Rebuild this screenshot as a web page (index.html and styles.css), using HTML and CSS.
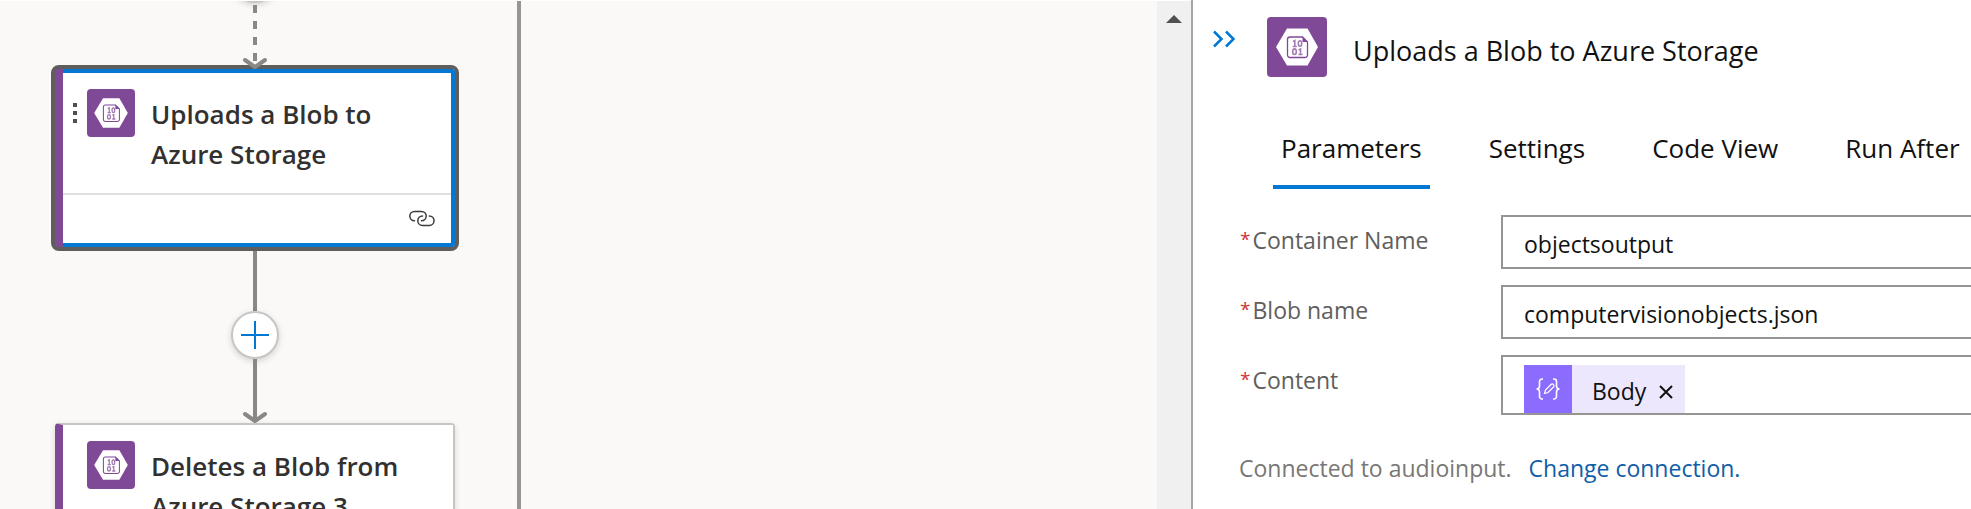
FILE: index.html
```html
<!DOCTYPE html>
<html lang="en">
<head>
<meta charset="utf-8">
<title>Workflow designer</title>
<link rel="stylesheet" href="styles.css">
</head>
<body>
<svg class="symbols" aria-hidden="true">
  <symbol id="blob" viewBox="0 0 60 60">
    <rect width="60" height="60" fill="#804998"/>
    <path d="M20 11.500h20.500l10.500 18.500-10.500 18.500H20L9 30z" fill="#fff"/>
    <path d="M23 20h12.500l5 5v13a2.500 2.500 0 0 1-2.500 2.500H23a2.500 2.500 0 0 1-2.500-2.500V22.500A2.500 2.500 0 0 1 23 20z" fill="#fff" stroke="#804998" stroke-width="1.300"/>
    <path d="M35.500 19.500v5.500h5.500z" fill="#804998"/>
    <g fill="none" stroke="#a27bb5" stroke-width="1.600">
      <path d="M26 24.500l1.800-1v6M25.800 29.500h4M33.500 37.500V32l-1.800 1M31.500 37.500h4"/>
      <ellipse cx="33" cy="26.500" rx="1.700" ry="2.800"/>
      <ellipse cx="27.500" cy="34.700" rx="1.800" ry="2.800"/>
    </g>
  </symbol>
</svg>
<div class="designer">
  <main class="canvas">
    <div class="scope">
      <button class="add" aria-label="Insert step above"></button>
      <svg class="edge" width="24" height="62" viewBox="0 0 24 62" aria-hidden="true">
        <path d="M12 2v60" stroke-width="4" stroke-dasharray="8 8"/>
        <path class="head" d="M2 57l10 7 10-7"/>
      </svg>
      <article class="card selected">
        <header class="card-head">
          <span class="grip"><i></i><i></i><i></i></span>
          <svg class="icon"><use href="#blob"/></svg>
          <h2 class="card-title">Uploads a Blob to Azure Storage</h2>
        </header>
        <footer class="card-foot">
          <svg width="26" height="18" viewBox="0 0 26 18" fill="none" stroke="#3b3a39" stroke-width="1.500" stroke-linecap="round" role="img" aria-label="Connection">
            <path d="M5.500 11.800a4.700 4.700 0 0 1 0-9.400H12.500a4.700 4.700 0 0 1 0 9.400"/>
            <path d="M20.300 7a4.700 4.700 0 0 1 0 9.400H13.500a4.700 4.700 0 0 1 0-9.400"/>
          </svg>
        </footer>
      </article>
      <div class="line"></div>
      <button class="add" aria-label="Insert step">
        <svg width="28" height="28" viewBox="0 0 28 28" stroke="#0078d4" stroke-width="2"><path d="M14 0v28M0 14h28"/></svg>
      </button>
      <svg class="edge" width="24" height="64" viewBox="0 0 24 64" aria-hidden="true">
        <path d="M12 0v62" stroke-width="4"/>
        <path class="head" d="M2 55l10 7 10-7"/>
      </svg>
      <article class="card plain">
        <header class="card-head">
          <span class="grip"></span>
          <svg class="icon"><use href="#blob"/></svg>
          <h2 class="card-title">Deletes a Blob from Azure Storage 3</h2>
        </header>
      </article>
    </div>
    <div class="scroll"><svg width="16" height="8" viewBox="0 0 16 8"><path d="M8 0l8 8H0z" fill="#505050"/></svg></div>
  </main>
  <aside class="panel">
    <header class="panel-head">
      <button class="collapse" aria-label="Collapse panel">
        <svg width="24" height="18" viewBox="0 0 24 18" fill="none" stroke="#0078d4" stroke-width="2.500"><path d="M1 1.500L8.500 9 1 16.500M13 1.500L20.500 9 13 16.500"/></svg>
      </button>
      <svg class="icon large"><use href="#blob"/></svg>
      <h1 class="panel-title">Uploads a Blob to Azure Storage</h1>
    </header>
    <nav class="tabs" role="tablist">
      <button class="tab active" role="tab" aria-selected="true">Parameters</button>
      <button class="tab" role="tab">Settings</button>
      <button class="tab" role="tab">Code View</button>
      <button class="tab" role="tab">Run After</button>
    </nav>
    <form class="form">
      <div class="row">
        <label class="label" for="container"><span class="star">*</span>Container Name</label>
        <input class="field" id="container" type="text" value="objectsoutput">
      </div>
      <div class="row">
        <label class="label" for="blobname"><span class="star">*</span>Blob name</label>
        <input class="field" id="blobname" type="text" value="computervisionobjects.json">
      </div>
      <div class="row">
        <span class="label" id="content-label"><span class="star">*</span>Content</span>
        <div class="field tokens" role="group" aria-labelledby="content-label">
          <span class="token">
            <span class="token-icon">
              <svg width="24" height="22" viewBox="0 0 24 22" fill="none" stroke="#fff" stroke-width="1.600"><path d="M7 1H6a2.500 2.500 0 0 0-2.500 2.500V8c0 1.500-1 3-3 3 2 0 3 1.500 3 3v4.500A2.500 2.500 0 0 0 6 21h1M17 1h1a2.500 2.500 0 0 1 2.500 2.500V8c0 1.500 1 3 3 3-2 0-3 1.500-3 3v4.500A2.500 2.500 0 0 1 18 21h-1"/><path d="M8.500 15.500l1-3.500 5.500-5.500a1.500 1.500 0 0 1 2.500 2.500L12 14.500z" stroke-width="1.200"/></svg>
            </span>
            <span class="token-text">Body</span>
            <button class="remove" type="button" aria-label="Remove Body">
              <svg width="14" height="14" viewBox="0 0 14 14" stroke="#111" stroke-width="2"><path d="M1 1l12 12M13 1L1 13"/></svg>
            </button>
          </span>
        </div>
      </div>
    </form>
    <p class="connection">Connected to audioinput. <a class="change" href="#">Change connection.</a></p>
  </aside>
</div>
</body>
</html>
```
FILE: styles.css
```css
* { box-sizing: border-box; }
body {
  margin: 0;
  font-family: "Open Sans", "Noto Sans", sans-serif;
  background: #fff;
}
button { font: inherit; border: 0; padding: 0; background: none; }
h1, h2, p { margin: 0; font-weight: 400; }
svg { display: block; flex: none; }
.symbols { position: absolute; width: 0; height: 0; }

.designer {
  display: grid;
  grid-template-columns: minmax(0, 1fr) 780px;
  height: 100vh;
  overflow: hidden;
}

.canvas {
  display: flex;
  justify-content: space-between;
  min-height: 0;
  overflow: hidden;
  border-top: 1px solid #fff;
  background: #faf9f8;
}
.scope {
  display: flex;
  flex-direction: column;
  align-items: center;
  padding: 0 58px 0 51px;
  border-right: 4px solid #979593;
}
.scope > * { flex: none; }
.scroll {
  width: 34px;
  padding: 14px 9px;
  background: #f0f0f0;
}

.add {
  display: grid;
  place-items: center;
  width: 48px;
  height: 48px;
  border: 2px solid #c8c6c4;
  border-radius: 50%;
  background: #fff;
  box-shadow: 0 2px 6px rgba(0, 0, 0, .16);
}
.add:first-child { margin-top: -46px; }
.line { width: 4px; height: 60px; background: #8a8886; }
.edge { position: relative; z-index: 1; overflow: visible; fill: none; stroke: #8a8886; }
.head { stroke-width: 4px; stroke-linecap: round; stroke-linejoin: round; }

.card { background: #fff; }
.selected {
  width: 408px;
  border: 4px solid #605e5c;
  border-radius: 8px;
  background: #804998;
  overflow: hidden;
}
.selected .card-head {
  margin-left: 8px;
  border: solid #0078d4;
  border-width: 4px 4px 0 0;
}
.card-head {
  display: flex;
  align-items: flex-start;
  gap: 16px;
  padding: 16px 40px 19px 10px;
  background: #fff;
}
.plain {
  width: 400px;
  border: 2px solid #c8c6c4;
  border-left: 8px solid #804998;
  border-radius: 4px;
  box-shadow: 0 2px 6px rgba(0, 0, 0, .14);
}
.grip {
  display: grid;
  gap: 4px;
  width: 4px;
  margin: 14px -6px 0 0;
}
.grip i { height: 4px; background: #505050; }
.icon { width: 48px; height: 48px; border-radius: 4px; }
.large { width: 60px; height: 60px; }
.card-title {
  flex: 1;
  padding-top: 5px;
  font-size: 26px;
  font-weight: 600;
  line-height: 40px;
  color: #323130;
}
.card-foot {
  display: flex;
  justify-content: flex-end;
  margin-left: 8px;
  padding: 16px;
  border: solid #0078d4;
  border-width: 0 4px 4px 0;
  background: #fff;
  box-shadow: inset 0 2px #e1dfdd;
}

.panel {
  min-width: 0;
  overflow: hidden;
  border-left: 2px solid #a6a6a6;
  background: #fff;
}
.panel-head { display: flex; align-items: flex-start; padding: 17px 0 0 20px; }
.collapse { width: 54px; padding-top: 13px; }
.panel-title {
  padding: 14px 0 0 26px;
  font-size: 27px;
  line-height: 40px;
  color: #111;
}
.tabs { display: flex; gap: 51px; margin-top: 44px; padding-left: 80px; }
.tab {
  height: 68px;
  padding: 0 8px 10px;
  border-bottom: 4px solid transparent;
  font-size: 26px;
  line-height: 40px;
  white-space: nowrap;
  color: #111;
}
.active { border-color: #0078d4; }
.form {
  display: grid;
  gap: 16px;
  width: 860px;
  padding: 26px 0 0 47px;
}
.row { display: grid; grid-template-columns: 261px 1fr; }
.label {
  display: flex;
  gap: 2px;
  padding-top: 7px;
  font-size: 23px;
  line-height: 36px;
  color: #605e5c;
}
.star { color: #d13438; font-size: 19px; line-height: 34px; }
.field {
  width: 100%;
  height: 54px;
  padding: 4px 21px 0;
  border: 2px solid #979593;
  font: inherit;
  font-size: 23px;
  color: #111;
  background: #fff;
}
.tokens { height: 60px; padding-top: 8px; }
.token {
  display: inline-flex;
  align-items: center;
  height: 48px;
  background: #ece7fd;
}
.token-icon {
  display: grid;
  place-items: center;
  width: 48px;
  height: 48px;
  background: #8c6cff;
}
.token-text { padding: 4px 13px 0 20px; }
.remove { padding: 6px 12px 0 0; }
.connection {
  padding: 35px 0 0 46px;
  font-size: 23px;
  line-height: 36px;
  color: #797775;
}
.change { margin-left: 11px; color: #0f5ea8; text-decoration: none; }
```
